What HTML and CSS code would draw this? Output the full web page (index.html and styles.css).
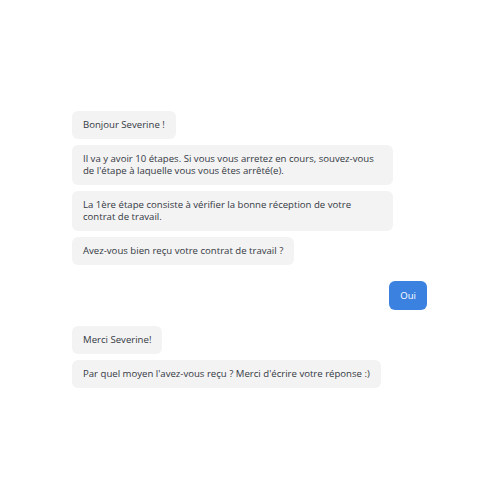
FILE: index.html
```html
<!DOCTYPE html>
<html>
<head>
<meta charset="utf-8">
<link rel="stylesheet" href="styles.css">
</head>
<body>
<div class="chat">
  <div class="group bot">
    <div class="bubble">Bonjour Severine !</div>
    <div class="bubble">Il va y avoir 10 étapes. Si vous vous arretez en cours, souvez-vous de l'étape à laquelle vous vous êtes arrêté(e).</div>
    <div class="bubble">La 1ère étape consiste à vérifier la bonne réception de votre contrat de travail.</div>
    <div class="bubble">Avez-vous bien reçu votre contrat de travail ?</div>
  </div>
  <div class="group user">
    <div class="bubble">Oui</div>
  </div>
  <div class="group bot">
    <div class="bubble">Merci Severine!</div>
    <div class="bubble">Par quel moyen l'avez-vous reçu ? Merci d'écrire votre réponse :)</div>
  </div>
</div>
</body>
</html>
```
FILE: styles.css
```css
html, body {
  margin: 0;
  padding: 0;
  background: #ffffff;
}
body {
  width: 500px;
  height: 500px;
  font-family: "Open Sans", "Liberation Sans", sans-serif;
  font-size: 9.6px;
  line-height: 12px;
  color: #343944;
}
.chat {
  padding: 111px 73px 0 72px;
  display: flex;
  flex-direction: column;
}
.group {
  display: flex;
  flex-direction: column;
  gap: 6px;
}
.group.bot {
  align-items: flex-start;
}
.group.user {
  align-items: flex-end;
  margin: 16px 0 16px;
}
.bubble {
  max-width: 299px;
  padding: 8px 11px;
  border-radius: 6px;
  background: #f3f3f3;
}
.user .bubble {
  background: #3b82e0;
  color: #ffffff;
  padding: 8.5px 11px;
}
```
